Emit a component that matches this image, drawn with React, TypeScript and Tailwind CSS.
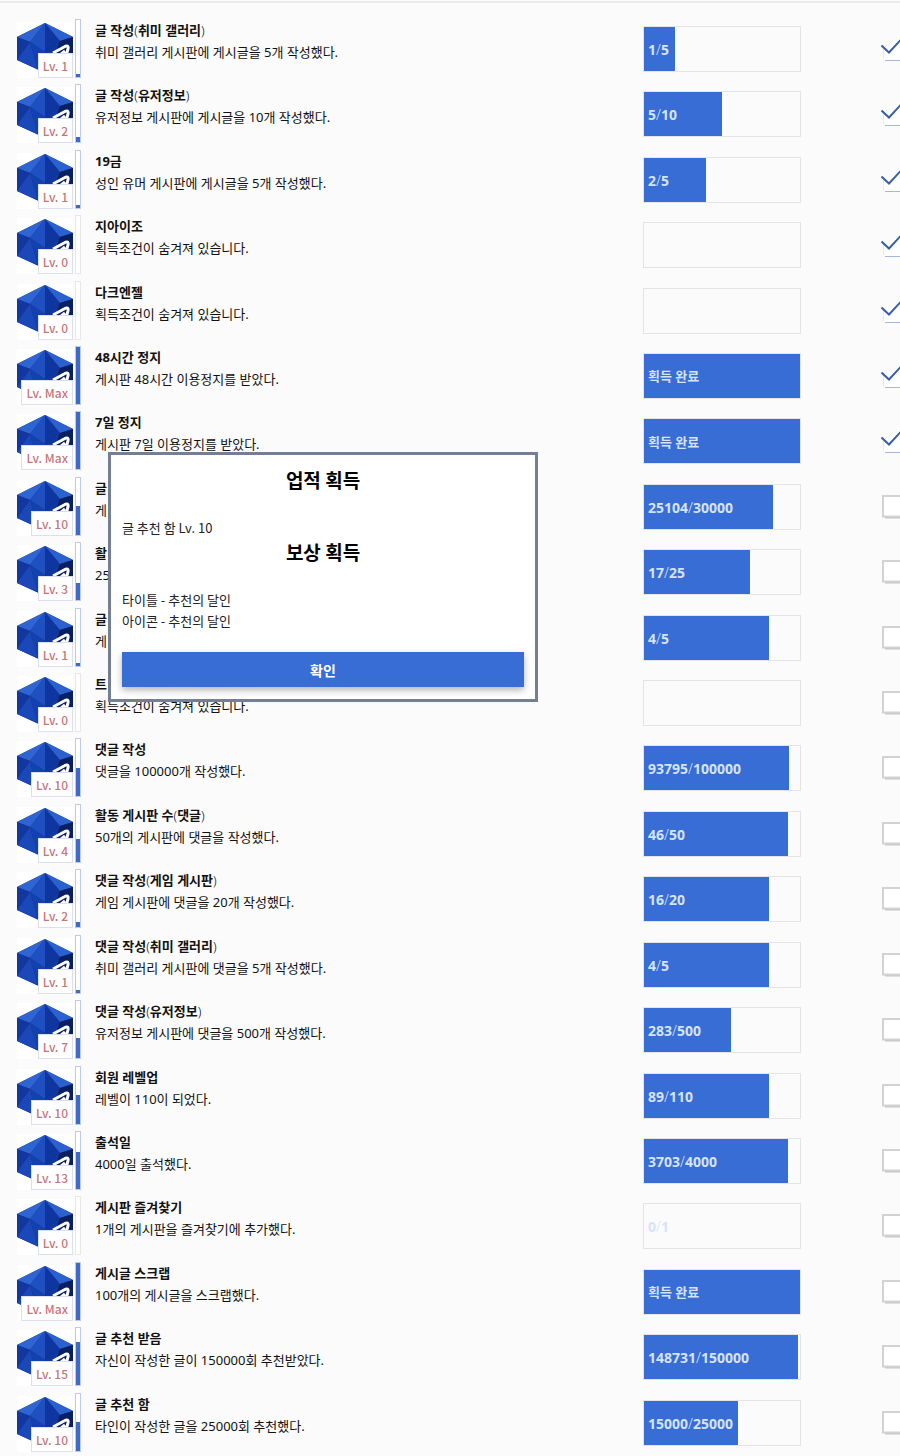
import { useState } from "react";

type Achievement = {
  title: string;
  desc: string;
  level: string;
  levelPercent: number;
  progress: string;
  percent: number;
  checked?: boolean;
};

const HIDDEN = "획득조건이 숨겨져 있습니다.";
const DONE = "획득 완료";

const achievements: Achievement[] = [
  { title: "글 작성(취미 갤러리)", desc: "취미 갤러리 게시판에 게시글을 5개 작성했다.", level: "1", levelPercent: 5, progress: "1/5", percent: 20, checked: true },
  { title: "글 작성(유저정보)", desc: "유저정보 게시판에 게시글을 10개 작성했다.", level: "2", levelPercent: 10, progress: "5/10", percent: 50, checked: true },
  { title: "19금", desc: "성인 유머 게시판에 게시글을 5개 작성했다.", level: "1", levelPercent: 5, progress: "2/5", percent: 40, checked: true },
  { title: "지아이조", desc: HIDDEN, level: "0", levelPercent: 0, progress: "", percent: 0, checked: true },
  { title: "다크엔젤", desc: HIDDEN, level: "0", levelPercent: 0, progress: "", percent: 0, checked: true },
  { title: "48시간 정지", desc: "게시판 48시간 이용정지를 받았다.", level: "Max", levelPercent: 100, progress: DONE, percent: 100, checked: true },
  { title: "7일 정지", desc: "게시판 7일 이용정지를 받았다.", level: "Max", levelPercent: 100, progress: DONE, percent: 100, checked: true },
  { title: "글", desc: "게", level: "10", levelPercent: 50, progress: "25104/30000", percent: 83 },
  { title: "활", desc: "25", level: "3", levelPercent: 30, progress: "17/25", percent: 68 },
  { title: "글", desc: "게", level: "1", levelPercent: 5, progress: "4/5", percent: 80 },
  { title: "트", desc: HIDDEN, level: "0", levelPercent: 0, progress: "", percent: 0 },
  { title: "댓글 작성", desc: "댓글을 100000개 작성했다.", level: "10", levelPercent: 50, progress: "93795/100000", percent: 93 },
  { title: "활동 게시판 수(댓글)", desc: "50개의 게시판에 댓글을 작성했다.", level: "4", levelPercent: 40, progress: "46/50", percent: 92 },
  { title: "댓글 작성(게임 게시판)", desc: "게임 게시판에 댓글을 20개 작성했다.", level: "2", levelPercent: 10, progress: "16/20", percent: 80 },
  { title: "댓글 작성(취미 갤러리)", desc: "취미 갤러리 게시판에 댓글을 5개 작성했다.", level: "1", levelPercent: 5, progress: "4/5", percent: 80 },
  { title: "댓글 작성(유저정보)", desc: "유저정보 게시판에 댓글을 500개 작성했다.", level: "7", levelPercent: 35, progress: "283/500", percent: 56 },
  { title: "회원 레벨업", desc: "레벨이 110이 되었다.", level: "10", levelPercent: 50, progress: "89/110", percent: 80 },
  { title: "출석일", desc: "4000일 출석했다.", level: "13", levelPercent: 65, progress: "3703/4000", percent: 92 },
  { title: "게시판 즐겨찾기", desc: "1개의 게시판을 즐겨찾기에 추가했다.", level: "0", levelPercent: 0, progress: "0/1", percent: 0 },
  { title: "게시글 스크랩", desc: "100개의 게시글을 스크랩했다.", level: "Max", levelPercent: 100, progress: DONE, percent: 100 },
  { title: "글 추천 받음", desc: "자신이 작성한 글이 150000회 추천받았다.", level: "15", levelPercent: 75, progress: "148731/150000", percent: 99 },
  { title: "글 추천 함", desc: "타인이 작성한 글을 25000회 추천했다.", level: "10", levelPercent: 50, progress: "15000/25000", percent: 60 },
];

// 굵은 글씨 안의 괄호와 슬래시는 얇게 표시
function BoldText({ text }: { text: string }) {
  return (
    <>
      {text.split(/([()/])/).map((part, i) =>
        /^[()/]$/.test(part) ? (
          <span key={i} className="font-light">
            {part}
          </span>
        ) : (
          part
        ),
      )}
    </>
  );
}

function GemIcon() {
  return (
    <svg viewBox="0 0 56 56" className="h-14 w-14 bg-white" aria-hidden="true">
      <path d="M28 1 L56 15 V38 L28 51 L0 38 V15 Z" fill="#0c2c8c" />
      <path d="M28 1 L0 15 L13 20 Z" fill="#2f65d3" />
      <path d="M28 1 L13 20 L28 30 Z" fill="#1f4fc0" />
      <path d="M28 1 L28 30 L43 19 Z" fill="#0f359f" />
      <path d="M28 1 L43 19 L56 15 Z" fill="#2b60cf" />
      <path d="M0 15 L13 20 L0 38 Z" fill="#1238a0" />
      <path d="M13 20 L0 38 L21 47 Z" fill="#1a48b8" />
      <path d="M13 20 L28 30 V51 L21 47 Z" fill="#1541ad" />
      <path d="M28 30 L43 19 L36 48 L28 51 Z" fill="#12379f" />
      <path d="M43 19 L56 15 V38 L32 49 Z" fill="#08205f" />
      <path d="M36 31 L47 25 Q52 22 51 27 L49 34 M43 33 L48 29" fill="none" stroke="#fff" strokeWidth="3" />
    </svg>
  );
}

function LevelIcon({ level, percent }: { level: string; percent: number }) {
  return (
    <div className="flex items-end gap-[2px]">
      <div className="relative">
        <GemIcon />
        <span className="absolute right-0 bottom-0 border border-[#dcdfee] bg-white px-1 text-xs leading-[23px] font-medium text-[#c8757a] [font-family:'Noto_Sans_CJK_KR',sans-serif]">
          Lv. {level}
        </span>
      </div>
      <div
        className={`flex h-[59px] w-[6px] flex-col justify-end border bg-white ${
          percent > 0 ? "border-[#bccbed]" : "border-[#e8e8ec]"
        }`}
      >
        <div className="bg-[#3e69c4]" style={{ height: `${percent}%` }} />
      </div>
    </div>
  );
}

function Check({ label, defaultChecked }: { label: string; defaultChecked: boolean }) {
  const [checked, setChecked] = useState(defaultChecked);
  return (
    <label className="block h-[24px] w-[30px]">
      <input
        type="checkbox"
        aria-label={label}
        checked={checked}
        onChange={(e) => setChecked(e.target.checked)}
        className="sr-only"
      />
      <svg viewBox="0 0 30 24" width="30" height="24" aria-hidden="true">
        {checked ? (
          <>
            <path d="M3 7 L8 11 L19 0 H30 V23 H3 Z" fill="#fff" />
            <path d="M2.5 9 V22" stroke="#e4e8f0" />
            <path d="M4 23.5 H30" stroke="#a3b9dc" />
            <path d="M0.5 8.5 L8 15.5 L21 1.5" fill="none" stroke="#365fa8" strokeWidth="2" />
          </>
        ) : (
          <>
            <path d="M4 22.5 H30" stroke="#c4c4c4" strokeWidth="2" />
            <rect x="2" y="1" width="30" height="20.5" fill="#fff" stroke="#d2d2d2" strokeWidth="2" />
          </>
        )}
      </svg>
    </label>
  );
}

function Row({ item }: { item: Achievement }) {
  return (
    <li className="flex items-start">
      <LevelIcon level={item.level} percent={item.levelPercent} />
      <div className="min-w-0 flex-1 pl-[14px] text-[13px] leading-[22px] text-[#111]">
        <h3 className="font-bold">
          <BoldText text={item.title} />
        </h3>
        <p>{item.desc}</p>
      </div>
      <div className="mt-[7px] flex shrink-0 items-center gap-20">
        <div className="grid h-[46px] w-[158px] items-center border border-[#e4e4e6]">
          <div className="col-start-1 row-start-1 h-full bg-[#376dd4]" style={{ width: `${item.percent}%` }} />
          <span
            className={`col-start-1 row-start-1 pt-[2px] pl-1 font-bold text-[#d6e3fa] ${
              item.progress === DONE ? "text-[13px]" : "text-sm"
            }`}
          >
            <BoldText text={item.progress} />
          </span>
        </div>
        <Check label={item.title} defaultChecked={!!item.checked} />
      </div>
    </li>
  );
}

function RewardModal({ onClose }: { onClose: () => void }) {
  return (
    <div
      role="dialog"
      aria-label="업적 획득"
      className="absolute top-[452px] left-[108px] w-[430px] border-[3px] border-[#747f95] bg-white px-[11px] pt-[11px] pb-3 text-[13px] leading-[21px] text-[#222] [font-family:'Noto_Sans_CJK_KR',sans-serif]"
    >
      <h2 className="text-center text-[19px] leading-[28px] font-bold text-black">업적 획득</h2>
      <p className="mt-[23px]">글 추천 함 Lv. 10</p>
      <h2 className="text-center text-[19px] leading-[28px] font-bold text-black">보상 획득</h2>
      <p className="mt-[23px]">타이틀 - 추천의 달인</p>
      <p>아이콘 - 추천의 달인</p>
      <button
        type="button"
        onClick={onClose}
        className="mt-[21px] block h-[35px] w-full bg-[#376dd4] text-sm font-bold text-white shadow-[0_3px_7px_rgba(0,0,0,0.3)]"
      >
        확인
      </button>
    </div>
  );
}

export default function App() {
  const [open, setOpen] = useState(true);

  return (
    <div className="relative flex min-h-screen flex-col overflow-hidden bg-[#fbfbfb] [font-family:'Noto_Sans','Noto_Sans_CJK_KR',sans-serif]">
      <div className="mt-px border-t-2 border-[#ebebeb]" />
      <ul className="-mr-[11px] -mb-[2px] grid flex-1 auto-rows-fr pt-4 pl-[17px]">
        {achievements.map((item, index) => (
          <Row key={index} item={item} />
        ))}
      </ul>
      {open && <RewardModal onClose={() => setOpen(false)} />}
    </div>
  );
}
